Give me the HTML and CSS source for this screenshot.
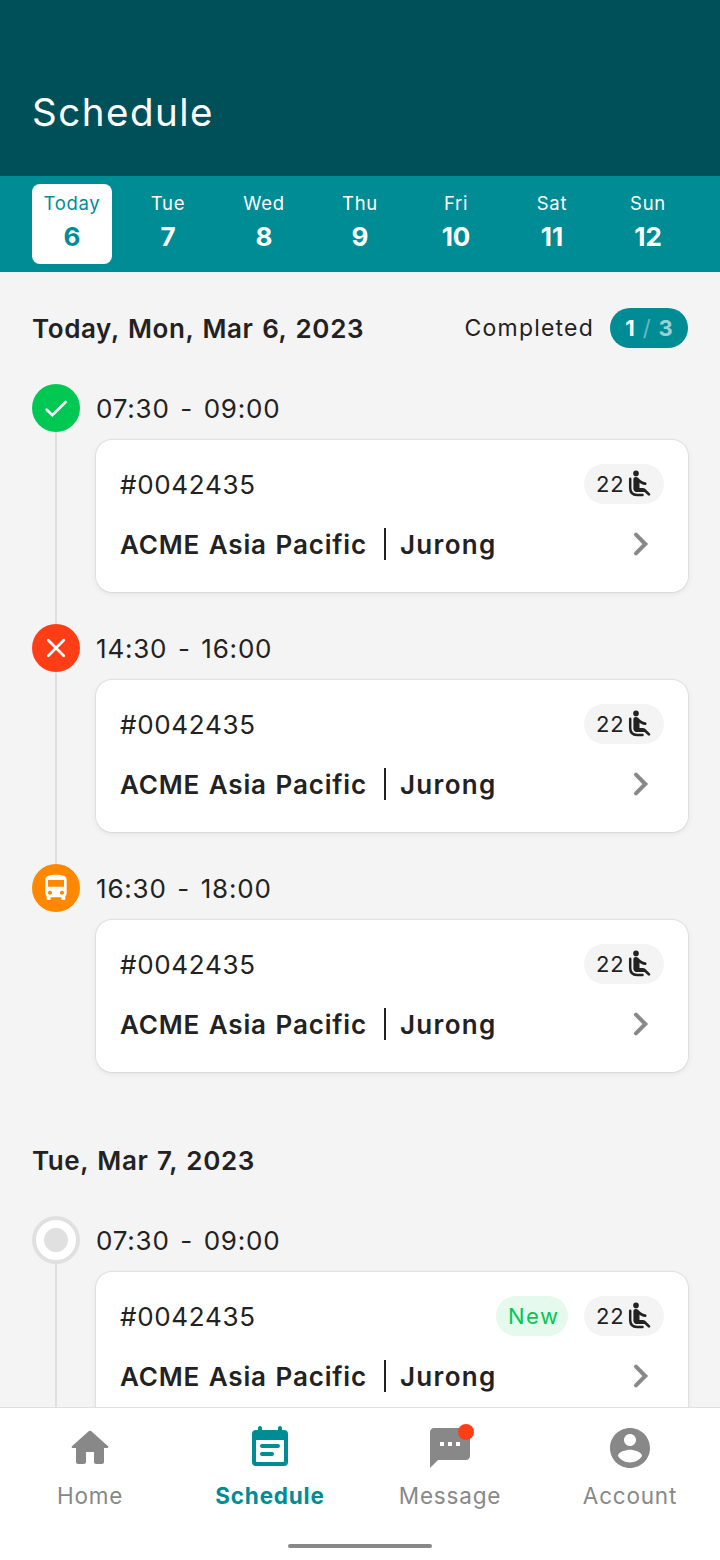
FILE: index.html
```html
<!DOCTYPE html>
<html lang="en">
<head>
  <meta charset="UTF-8">
  <meta name="viewport" content="width=device-width, initial-scale=1.0">
  <title>Schedule</title>
  <link rel="stylesheet" href="styles.css">
</head>
<body>
  <!-- shared icons -->
  <svg class="sprite" xmlns="http://www.w3.org/2000/svg">
    <symbol id="icon-seat" viewBox="0 0 28 28">
      <circle cx="12" cy="3.4" r="2.8" fill="currentColor"/>
      <path d="M6.2 8.7V18c0 4.4 2.5 6.9 6.900 6.900h5.400" fill="none" stroke="currentColor" stroke-width="2.5" stroke-linecap="round"/>
      <path d="M9.400 9.200c0-1.400 1-2.300 2.400-2.300 1 0 1.800.4 2.500 1.200 2 2.400 4.200 3.700 7 4.200.7.1 1.200.6 1.200 1.400 0 .8-.7 1.400-1.500 1.300-2.100-.3-4-1.100-5.500-2.300v5.400h3.300c1.100 0 1.900.3 2.600 1l4.500 4.300c1.200 1.300-.5 3.200-1.900 1.900l-3.500-3.200h-7.400c-2 0-3.700-1.400-3.700-3.400z" fill="currentColor"/>
    </symbol>
    <symbol id="icon-chevron" viewBox="0 0 48 48">
      <path d="M20 14.700 29.300 24 20 33.300" fill="none" stroke="currentColor" stroke-width="4" stroke-linecap="round"/>
    </symbol>
  </svg>

  <div class="app">
    <header class="header">
      <h1>Schedule</h1>
    </header>

    <div class="week">
      <div class="day active"><span>Today</span><b>6</b></div>
      <div class="day"><span>Tue</span><b>7</b></div>
      <div class="day"><span>Wed</span><b>8</b></div>
      <div class="day"><span>Thu</span><b>9</b></div>
      <div class="day"><span>Fri</span><b>10</b></div>
      <div class="day"><span>Sat</span><b>11</b></div>
      <div class="day"><span>Sun</span><b>12</b></div>
    </div>

    <main class="content">
      <section class="section">
        <div class="section-head">
          <h2>Today, Mon, Mar 6, 2023</h2>
          <div class="completed">
            <span class="completed-label">Completed</span>
            <span class="counter"><b>1</b><i>/</i><b class="total">3</b></span>
          </div>
        </div>

        <div class="item">
          <div class="rail">
            <div class="status done">
              <svg viewBox="0 0 32 32"><path d="M6.700 17.700 12.300 23.200 25.600 10"/></svg>
            </div>
            <div class="line"></div>
          </div>
          <div class="entry">
            <div class="time">07:30 - 09:00</div>
            <div class="card">
              <div class="row">
                <span class="number">#0042435</span>
                <span class="seats">22<svg><use href="#icon-seat"/></svg></span>
              </div>
              <div class="row route">
                <span class="company">ACME Asia Pacific</span>
                <span class="divider"></span>
                <span class="place">Jurong</span>
                <svg class="chevron"><use href="#icon-chevron"/></svg>
              </div>
            </div>
          </div>
        </div>

        <div class="item">
          <div class="rail">
            <div class="status failed">
              <svg viewBox="0 0 32 32"><path d="M8.300 8.300 23.700 23.700M23.700 8.300 8.300 23.700"/></svg>
            </div>
            <div class="line"></div>
          </div>
          <div class="entry">
            <div class="time">14:30 - 16:00</div>
            <div class="card">
              <div class="row">
                <span class="number">#0042435</span>
                <span class="seats">22<svg><use href="#icon-seat"/></svg></span>
              </div>
              <div class="row route">
                <span class="company">ACME Asia Pacific</span>
                <span class="divider"></span>
                <span class="place">Jurong</span>
                <svg class="chevron"><use href="#icon-chevron"/></svg>
              </div>
            </div>
          </div>
        </div>

        <div class="item">
          <div class="rail">
            <div class="status current">
              <svg viewBox="0 0 24 24"><path d="M4 16c0 .88.39 1.670 1 2.220V20c0 .55.45 1 1 1h1c.55 0 1-.45 1-1v-1h8v1c0 .55.45 1 1 1h1c.55 0 1-.45 1-1v-1.780c.61-.55 1-1.340 1-2.220V6c0-3.500-3.580-4-8-4s-8 .5-8 4v10zm3.500 1c-.83 0-1.500-.67-1.500-1.500S6.670 14 7.500 14s1.500.67 1.500 1.500S8.330 17 7.500 17zm9 0c-.83 0-1.500-.67-1.500-1.500s.67-1.500 1.500-1.500 1.500.67 1.500 1.500-.67 1.500-1.500 1.500zm1.500-6H6V6h12v5z"/></svg>
            </div>
          </div>
          <div class="entry">
            <div class="time">16:30 - 18:00</div>
            <div class="card">
              <div class="row">
                <span class="number">#0042435</span>
                <span class="seats">22<svg><use href="#icon-seat"/></svg></span>
              </div>
              <div class="row route">
                <span class="company">ACME Asia Pacific</span>
                <span class="divider"></span>
                <span class="place">Jurong</span>
                <svg class="chevron"><use href="#icon-chevron"/></svg>
              </div>
            </div>
          </div>
        </div>
      </section>

      <section class="section">
        <div class="section-head">
          <h2>Tue, Mar 7, 2023</h2>
        </div>

        <div class="item">
          <div class="rail">
            <div class="status pending"></div>
            <div class="line"></div>
          </div>
          <div class="entry">
            <div class="time">07:30 - 09:00</div>
            <div class="card">
              <div class="row">
                <span class="number">#0042435</span>
                <span class="new">New</span>
                <span class="seats">22<svg><use href="#icon-seat"/></svg></span>
              </div>
              <div class="row route">
                <span class="company">ACME Asia Pacific</span>
                <span class="divider"></span>
                <span class="place">Jurong</span>
                <svg class="chevron"><use href="#icon-chevron"/></svg>
              </div>
            </div>
          </div>
        </div>
      </section>
    </main>

    <nav class="nav">
      <div class="tabs">
        <a class="tab">
          <svg viewBox="0 0 24 24"><path d="M10 19v-5h4v5c0 .55.45 1 1 1h3c.55 0 1-.45 1-1v-7h1.700c.46 0 .68-.57.33-.87L12.670 3.600c-.38-.34-.96-.34-1.340 0l-8.360 7.530c-.34.3-.13.87.33.87H5v7c0 .55.45 1 1 1h3c.55 0 1-.45 1-1z"/></svg>
          <span>Home</span>
        </a>
        <a class="tab active">
          <svg viewBox="0 0 24 24"><path fill-rule="evenodd" d="M6 3V2a1 1 0 0 1 2 0v1h8V2a1 1 0 0 1 2 0v1h1a2 2 0 0 1 2 2v14a2 2 0 0 1-2 2H5a2 2 0 0 1-2-2V5a2 2 0 0 1 2-2zM5 8v10.500a.5.5 0 0 0 .5.5h13a.5.5 0 0 0 .5-.5V8zM8 10h8a1 1 0 0 1 0 2H8a1 1 0 0 1 0-2zM8 14h5a1 1 0 0 1 0 2H8a1 1 0 0 1 0-2z"/></svg>
          <span>Schedule</span>
        </a>
        <a class="tab">
          <svg viewBox="0 0 24 24"><path d="M20 2H4c-1.100 0-2 .9-2 2v18l4-4h14c1.100 0 2-.9 2-2V4c0-1.100-.9-2-2-2zM9 11H7V9h2v2zm4 0h-2V9h2v2zm4 0h-2V9h2v2z"/><circle class="dot" cx="20" cy="4" r="4"/></svg>
          <span>Message</span>
        </a>
        <a class="tab">
          <svg viewBox="0 0 24 24"><path d="M12 2C6.480 2 2 6.480 2 12s4.480 10 10 10 10-4.480 10-10S17.520 2 12 2zm0 3c1.660 0 3 1.340 3 3s-1.340 3-3 3-3-1.340-3-3 1.340-3 3-3zm0 14.200c-2.500 0-4.710-1.280-6-3.220.03-1.990 4-3.080 6-3.080 1.990 0 5.970 1.090 6 3.080-1.290 1.940-3.500 3.220-6 3.220z"/></svg>
          <span>Account</span>
        </a>
      </div>
      <div class="home-bar"></div>
    </nav>
  </div>
</body>
</html>
```
FILE: styles.css
```css
:root {
  --dark-teal: #00505a;
  --teal: #008c95;
  --text: #222;
  --grey: #888;
  --line: #e0e0e0;
  --bg: #f4f4f4;
  --green: #00c853;
  --red: #ff3d17;
  --orange: #ff8800;
}
* {
  margin: 0;
  padding: 0;
  box-sizing: border-box;
}
body {
  font-family: Inter, "Liberation Sans", sans-serif;
  color: var(--text);
  background: var(--bg);
}
.sprite {
  display: none;
}
.app {
  display: flex;
  flex-direction: column;
  height: 1560px;
  overflow: hidden;
}
.header {
  flex: none;
  height: 176px;
  padding: 87px 32px 0;
  background: var(--dark-teal);
  color: #fff;
}
.header h1 {
  font-size: 38.5px;
  font-weight: 400;
  line-height: 50px;
  letter-spacing: 1.5px;
}
.week {
  display: flex;
  flex: none;
  gap: 16px;
  height: 96px;
  padding: 8px 32px;
  background: var(--teal);
  color: #fff;
}
.day {
  display: flex;
  flex-direction: column;
  align-items: center;
  width: 80px;
  height: 80px;
  padding-top: 5px;
  border-radius: 8px;
}
.day.active {
  background: #fff;
  color: var(--teal);
}
.day span {
  font-size: 18.5px;
  line-height: 28px;
  letter-spacing: .7px;
}
.day b {
  font-size: 26px;
  font-weight: 700;
  line-height: 40px;
}
.content {
  flex: 1;
  min-height: 0;
  overflow: hidden;
}
.section {
  padding: 36px 32px 0;
}
.section + .section {
  padding-top: 68px;
}
.section-head {
  display: flex;
  align-items: center;
  justify-content: space-between;
  height: 40px;
  margin-bottom: 36px;
}
.section-head h2 {
  font-size: 26px;
  font-weight: 600;
  letter-spacing: .6px;
  word-spacing: 1.5px;
}
.completed {
  display: flex;
  align-items: center;
  gap: 16px;
}
.completed-label {
  font-size: 23px;
  letter-spacing: 1.2px;
}
.counter {
  display: flex;
  align-items: center;
  justify-content: center;
  gap: 8px;
  width: 78px;
  height: 40px;
  border-radius: 20px;
  background: var(--teal);
  color: #fff;
  font-size: 22px;
}
.counter b {
  font-weight: 700;
}
.counter i {
  font-style: normal;
  opacity: .4;
}
.counter .total {
  opacity: .6;
}
.item {
  display: flex;
  gap: 16px;
}
.item + .item {
  margin-top: 32px;
}
.rail {
  display: flex;
  flex-direction: column;
  align-items: center;
  width: 48px;
}
.status {
  display: flex;
  flex: none;
  align-items: center;
  justify-content: center;
  width: 48px;
  height: 48px;
  border-radius: 50%;
}
.status svg {
  width: 32px;
  height: 32px;
  fill: none;
  stroke: #fff;
  stroke-width: 2.7;
  stroke-linecap: round;
}
.status.done {
  background: var(--green);
}
.status.failed {
  background: var(--red);
}
.status.current {
  background: var(--orange);
}
.status.current svg {
  fill: #fff;
  stroke: none;
}
.status.pending {
  border: 4px solid var(--line);
  background: radial-gradient(circle, var(--line) 11.6px, #fff 12.4px);
}
.line {
  flex: 1;
  width: 2px;
  margin-bottom: -32px;
  background: var(--line);
}
.entry {
  flex: 1;
}
.time {
  height: 56px;
  font-size: 26px;
  line-height: 49px;
  letter-spacing: .8px;
  word-spacing: 2.5px;
}
.card {
  height: 152px;
  padding: 24px;
  border-radius: 16px;
  background: #fff;
  box-shadow: 0 0 0 1px rgba(0, 0, 0, .06), 0 2px 6px rgba(0, 0, 0, .07);
}
.row {
  display: flex;
  align-items: center;
  height: 40px;
}
.number {
  margin-right: auto;
  font-size: 26px;
  letter-spacing: .7px;
}
.seats,
.new {
  display: flex;
  align-items: center;
  height: 40px;
  border-radius: 20px;
  font-size: 22px;
  letter-spacing: .8px;
}
.seats {
  justify-content: space-between;
  width: 80px;
  padding: 0 12px;
  background: var(--bg);
}
.seats svg {
  flex: none;
  width: 28px;
  height: 28px;
  margin-left: -2px;
}
.new {
  width: 72px;
  margin-right: 16px;
  padding-left: 12px;
  background: #e5f9ed;
  color: var(--green);
  letter-spacing: 1.5px;
}
.route {
  height: 48px;
  margin-top: 16px;
  font-size: 26px;
  font-weight: 600;
}
.company {
  width: 264px;
  letter-spacing: .8px;
  word-spacing: 1.5px;
  white-space: nowrap;
}
.divider {
  width: 2px;
  height: 32px;
  margin-right: 14px;
  background: var(--text);
}
.place {
  letter-spacing: 1.3px;
}
.chevron {
  width: 48px;
  height: 48px;
  margin-left: auto;
  color: var(--grey);
}
.nav {
  display: flex;
  flex: none;
  flex-direction: column;
  align-items: center;
  height: 153px;
  border-top: 1px solid var(--line);
  background: #fff;
}
.tabs {
  display: flex;
  width: 100%;
  height: 136px;
}
.tab {
  display: flex;
  flex: 1;
  flex-direction: column;
  align-items: center;
  padding-top: 16px;
  color: var(--grey);
  font-size: 22.5px;
  line-height: 48px;
  letter-spacing: .8px;
}
.tab.active {
  color: var(--teal);
  font-weight: 700;
}
.tab svg {
  width: 48px;
  height: 48px;
  fill: currentColor;
}
.tab .dot {
  fill: var(--red);
}
.home-bar {
  width: 144px;
  height: 4px;
  border-radius: 2px;
  background: var(--grey);
}
```
